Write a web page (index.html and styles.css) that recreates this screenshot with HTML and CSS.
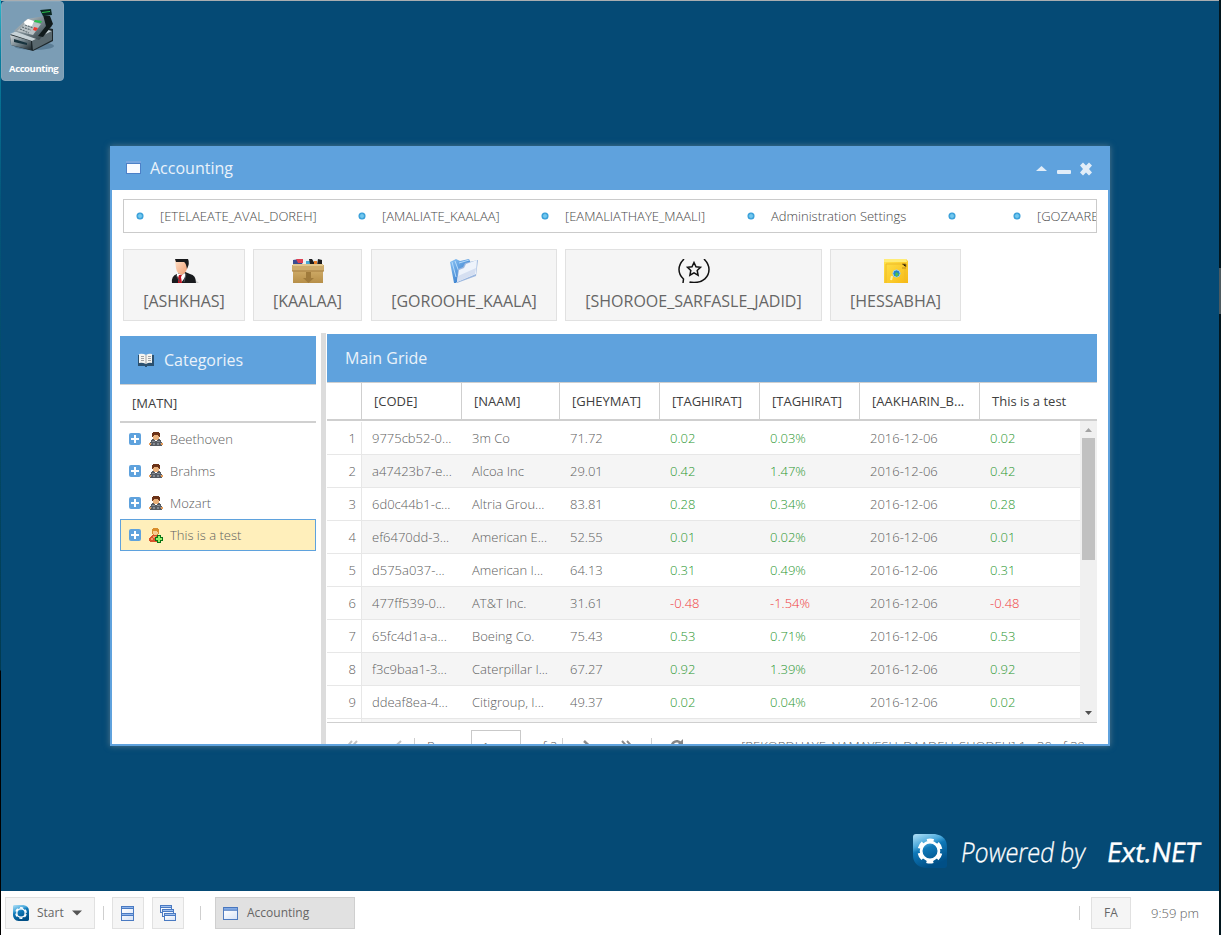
FILE: index.html
```html
<!DOCTYPE html>
<html lang="en">
<head>
<meta charset="utf-8">
<title>Accounting</title>
<link rel="stylesheet" href="styles.css">
</head>
<body>
<svg class="defs" width="0" height="0">
  <defs>
    <linearGradient id="logo" x1="0" y1="0" x2=".4" y2="1"><stop offset="0" stop-color="#b4e2f8"/><stop offset=".35" stop-color="#4aa9dc"/><stop offset=".5" stop-color="#0f78b8"/><stop offset="1" stop-color="#004f86"/></linearGradient>
    <linearGradient id="steel" x1="0" y1="0" x2="1" y2="1"><stop offset="0" stop-color="#d5dadd"/><stop offset=".5" stop-color="#73838b"/><stop offset="1" stop-color="#222c30"/></linearGradient>
    <linearGradient id="pane" x1="0" y1="0" x2="1" y2="1"><stop offset="0" stop-color="#fff"/><stop offset="1" stop-color="#d7e3f6"/></linearGradient>
    <linearGradient id="blue" x1="0" y1="0" x2="1" y2="1"><stop offset="0" stop-color="#8cc4f5"/><stop offset="1" stop-color="#1763bd"/></linearGradient>
    <linearGradient id="box" x1="0" y1="0" x2="0" y2="1"><stop offset="0" stop-color="#d8b674"/><stop offset="1" stop-color="#b78f48"/></linearGradient>
    <linearGradient id="gold" x1="0" y1="0" x2="1" y2="1"><stop offset="0" stop-color="#ffe44c"/><stop offset="1" stop-color="#f8b913"/></linearGradient>
    <linearGradient id="skin" x1="0" y1="0" x2="1" y2="1"><stop offset="0" stop-color="#ffe0c8"/><stop offset="1" stop-color="#ee9a6c"/></linearGradient>
    <symbol id="i-logo" viewBox="0 0 34 34">
      <path fill="url(#logo)" d="M3 0h19Q34 2 34 13v18q0 3-3 3H12Q0 32 0 21V3q0-3 3-3z"/>
      <circle cx="17" cy="17" r="8.900" fill="none" stroke="#fff" stroke-width="2.800"/>
      <circle cx="17" cy="17" r="11" fill="none" stroke="#fff" stroke-width="3" stroke-dasharray="6.700 4.820" stroke-dashoffset="-2.400"/>
    </symbol>
    <symbol id="i-win" viewBox="0 0 16 14">
      <path fill="#4373bd" d="M0 0h16v14H0z"/><path fill="#83aae4" d="M1 1h14v2H1z"/><path fill="url(#pane)" d="M1 4h14v9H1z"/>
    </symbol>
    <symbol id="i-plus" viewBox="0 0 12 12"><rect width="12" height="12" rx="2" fill="#5fa2dd"/><path fill="#fff" d="M5 2h2v3h3v2H7v3H5V7H2V5h3z"/></symbol>
    <symbol id="i-user" viewBox="0 0 16 16" shape-rendering="crispEdges">
      <path fill="#6b3218" d="M5 1h6v1h1v4h-1v2H5V6H4V2h1z"/><path fill="#e9b07a" d="M6 4h4v1h1v3h-1v1H6V8H5V5h1z"/>
      <path fill="#565b62" d="M4 8h2v1h1v1h2V9h1V8h2v1h1v2h1v2h1v1h-1v1H2v-1H1v-1h1v-2h1V9h1z"/>
      <path fill="#868c94" d="M4 10h3v1H4zM9 10h3v1H9zM5 12h2v2H5zM9 12h2v2H9zM3 12h1v1H3zM12 12h1v1h-1z"/><path fill="#e59c58" d="M1 12h2v2H1zM13 12h2v2h-2z"/>
    </symbol>
    <symbol id="i-useradd" viewBox="0 0 16 16" shape-rendering="crispEdges">
      <path fill="#d98d2c" d="M5 1h5v1h1v5h-1v1H5V7H4V2h1z"/><path fill="#f8cb90" d="M5 4h4v1h1v2H9v1H6V7H5z"/>
      <path fill="#d9532b" d="M4 8h6v1h1v6H2v-1H1v-3h1v-1h1V9h1z"/><path fill="#f39a62" d="M5 9h3v2H5zM3 11h2v2H3z"/>
      <path fill="#087416" d="M9 8h4v2h2v4h-2v2H9v-2H7v-4h2z"/><path fill="#8ef067" d="M10 9h2v2h2v2h-2v2h-2v-2H8v-2h2z"/>
    </symbol>
  </defs>
</svg>

<main class="desktop">
  <div class="shortcut">
    <svg width="48" height="44" viewBox="0 0 48 44">
      <ellipse cx="25" cy="37" rx="20" ry="4" fill="#36566e" opacity=".45"/>
      <path fill="#1d272b" d="M1 26l18-11 25 5v12L24 42 2 36z"/>
      <path fill="url(#steel)" d="M1 26l21 6v9L2 36z"/><path fill="#59686e" d="M23 32l20-10v9l-19 10z"/>
      <path fill="#18333e" d="M5 30l13 4v2L5 33z"/><path fill="#c7d2d7" d="M1 25l19-9 23 6-20 10z"/>
      <path fill="url(#steel)" d="M5 22L18 10l18-3 7 10-13 14z"/><path fill="#b9c2c6" d="M8 22l12-11 12 4-8 11z"/>
      <path fill="#111b1c" d="M34 6l7 1 3 8-10 13-5-1 8-10z"/><path fill="#0b2822" d="M31 1l11-1 1 6-9 1z"/>
      <path fill="#29c24c" d="M33 3l8-1v1l-8 1zM26 11l7 1-1 2-7-1z"/>
      <path fill="#fff" d="M15 13l4-3 6 2-2 5-7-1z"/><path stroke="#5f6d74" stroke-width="1.200" stroke-dasharray="2 1" d="M13 18l9 3M11 20l9 4M16 16l8 3"/><path fill="#ee3a30" d="M25 18l4 1-2 3-3-1z"/>
    </svg>
    <span>Accounting</span>
  </div>

  <section class="window">
    <header class="win-head">
      <svg width="15" height="13" viewBox="0 0 15 13"><path fill="#4c80c7" d="M0 0h15v13H0z"/><path fill="#78a6df" d="M0 0h15v2H0z"/><path fill="#f9fbff" d="M1 3h13v9H1z"/></svg>
      <h1>Accounting</h1>
      <svg class="tools" width="56" height="14" viewBox="0 0 56 14" fill="#e1edf8"><path d="M0 9l5.500-5L11 9z"/><rect x="21" y="8" width="14" height="4" rx="1"/><path d="M44 3l3-3 3 3 3-3 3 3-3 3.500 3 3.500-3 3-3-3-3 3-3-3 3-3.500z" transform="translate(0 .5)"/></svg>
    </header>
    <div class="win-body">
      <nav class="menu">
        <i></i><span class="m1">[ETELAEATE_AVAL_DOREH]</span>
        <i></i><span class="m2">[AMALIATE_KAALAA]</span>
        <i></i><span class="m3">[EAMALIATHAYE_MAALI]</span>
        <i></i><span class="m4">Administration Settings</span>
        <i></i><span class="m5"></span>
        <i></i><span class="m6">[GOZAARESHAAT]</span>
      </nav>
      <div class="actions">
        <button class="act a1"><svg width="32" height="24" viewBox="0 0 32 24"><path fill="#b9b9b9" opacity=".6" d="M24 18l7 6h-9z"/><path fill="#191b1e" d="M4 24q-1-7 5-9l6-3 7 3q6 1 6 9z"/><path fill="url(#skin)" d="M7 1h13l-1 9q-2 5-5 6-5-1-6-7z"/><path fill="#18191b" d="M7 0h13q2 4-1 10-1-6-3-7L8 3z"/><path fill="#fff" d="M9 14l5 2 3-2 1 3-5 7-4-7z"/><path fill="#c31422" d="M11 16h3l-1 2 1 6h-4v-5z"/><path stroke="#50555b" fill="none" d="M8 16l4 7M18 15l-2 8"/></svg><span>[ASHKHAS]</span></button>
        <button class="act a2"><svg width="32" height="24" viewBox="0 0 32 24"><path d="M2 0h28v7H2z" fill="#edf0f1"/><path fill="#394c91" d="M1 1l7-1 3 6H1z"/><path fill="#de4053" d="M4 0h7v4H6z"/><path fill="#49a9d4" d="M14 2h4v4h-4z"/><path fill="#1d1c1d" d="M17 0h3l3 5h-5zM26 0l4 1v5h-5z"/><path fill="#e77e27" d="M22 2h3v3h-3z"/><path fill="url(#box)" d="M1 6h30v18H1z"/><path fill="#ceac6c" d="M0 6h32v6H0z"/><path fill="#e2c78e" d="M1 5h30v2H1z"/><path stroke="#a47c3f" d="M0 12h32"/><path fill="#a07b3c" d="M14 13h5v6h3l-5.500 5-5.500-5h3z"/></svg><span>[KAALAA]</span></button>
        <button class="act a3"><svg width="32" height="24" viewBox="0 0 32 24"><path fill="url(#blue)" d="M2 3l6-3 4 2 9-2 3 7L8 24H6z"/><path stroke="#b5dafb" fill="none" d="M4 3l4 15M7 2l4 11M11 4l10-3"/><path fill="#9bb7df" d="M9 24l1-14 5-2 2-4 13-3-2 16z"/><path fill="#eef3fb" d="M9 23l2-12 5-2 2-4 11-4-1 14z"/><path fill="#d5dff1" d="M10 17l18-8-1 6L9 23z"/></svg><span>[GOROOHE_KAALA]</span></button>
        <button class="act a4"><svg width="32" height="24" viewBox="0 0 32 24" fill="none" stroke="#111" stroke-width="1.500"><path d="M6 0Q1 5 1 10.500 1 16 5.500 20L5 24M26 0q5 5 5 10.500C31 18 25 23.500 16 23.500q-3 0-4.500-.5"/><path d="M16 3.500l2 4.300 4.500.5-3.300 3.200.9 4.700-4.100-2.300-4.100 2.300.9-4.700-3.300-3.200 4.500-.5z"/></svg><span>[SHOROOE_SARFASLE_JADID]</span></button>
        <button class="act a5"><svg width="32" height="24" viewBox="0 0 32 24"><path fill="url(#gold)" d="M4 0h22l2 2v22H4z"/><path fill="#ffec76" d="M4 0h22l1 3H4z"/><path stroke="#eebb28" fill="none" d="M6 24V5h19v19"/><path stroke="#b98b1b" d="M22 5h4v3M22 9h4"/><circle cx="16.500" cy="14.500" r="3.600" fill="#2484c9" stroke="#9fd2ef"/><path fill="#55bf44" d="M16 13l3 2-2 3-2-2z"/><path stroke="#fff0a0" stroke-width="2" d="M12 17l-1 4"/></svg><span>[HESSABHA]</span></button>
      </div>

      <div class="panes">
        <aside class="tree">
          <h2><svg width="16" height="14" viewBox="0 0 16 14"><path fill="#2b506f" d="M0 2h16v11H9v1H7v-1H0z"/><path fill="#f4f4f0" d="M1 1q4-1 7 1 3-2 6-1v9q-3-1-6 1-4-2-7-1z"/><path stroke="#a0a3a5" fill="none" d="M8 2v9M3 3.500h3M3 5.500h3M3 7.500h3M10 3.500h3M10 5.500h3M10 7.500h3"/></svg>Categories</h2>
          <div class="tree-head">[MATN]</div>
          <div class="node"><svg width="12" height="12"><use href="#i-plus"/></svg><svg width="16" height="16"><use href="#i-user"/></svg>Beethoven</div>
          <div class="node"><svg width="12" height="12"><use href="#i-plus"/></svg><svg width="16" height="16"><use href="#i-user"/></svg>Brahms</div>
          <div class="node"><svg width="12" height="12"><use href="#i-plus"/></svg><svg width="16" height="16"><use href="#i-user"/></svg>Mozart</div>
          <div class="node selected"><svg width="12" height="12"><use href="#i-plus"/></svg><svg width="16" height="16"><use href="#i-useradd"/></svg>This is a test</div>
        </aside>
        <div class="splitter"></div>
        <section class="grid">
          <h2>Main Gride</h2>
          <div class="row head"><b></b><b>[CODE]</b><b>[NAAM]</b><b>[GHEYMAT]</b><b>[TAGHIRAT]</b><b>[TAGHIRAT]</b><b>[AAKHARIN_B...</b><b>This is a test</b></div>
          <div class="view">
            <div class="rows">
              <div class="row"><b>1</b><span>9775cb52-0...</span><span>3m Co</span><span>71.72</span><span class="up">0.02</span><span class="up">0.03%</span><span>2016-12-06</span><span class="up">0.02</span></div>
              <div class="row"><b>2</b><span>a47423b7-e...</span><span>Alcoa Inc</span><span>29.01</span><span class="up">0.42</span><span class="up">1.47%</span><span>2016-12-06</span><span class="up">0.42</span></div>
              <div class="row"><b>3</b><span>6d0c44b1-c...</span><span>Altria Grou...</span><span>83.81</span><span class="up">0.28</span><span class="up">0.34%</span><span>2016-12-06</span><span class="up">0.28</span></div>
              <div class="row"><b>4</b><span>ef6470dd-3...</span><span>American E...</span><span>52.55</span><span class="up">0.01</span><span class="up">0.02%</span><span>2016-12-06</span><span class="up">0.01</span></div>
              <div class="row"><b>5</b><span>d575a037-...</span><span>American I...</span><span>64.13</span><span class="up">0.31</span><span class="up">0.49%</span><span>2016-12-06</span><span class="up">0.31</span></div>
              <div class="row"><b>6</b><span>477ff539-0...</span><span>AT&amp;T Inc.</span><span>31.61</span><span class="down">-0.48</span><span class="down">-1.54%</span><span>2016-12-06</span><span class="down">-0.48</span></div>
              <div class="row"><b>7</b><span>65fc4d1a-a...</span><span>Boeing Co.</span><span>75.43</span><span class="up">0.53</span><span class="up">0.71%</span><span>2016-12-06</span><span class="up">0.53</span></div>
              <div class="row"><b>8</b><span>f3c9baa1-3...</span><span>Caterpillar I...</span><span>67.27</span><span class="up">0.92</span><span class="up">1.39%</span><span>2016-12-06</span><span class="up">0.92</span></div>
              <div class="row"><b>9</b><span>ddeaf8ea-4...</span><span>Citigroup, I...</span><span>49.37</span><span class="up">0.02</span><span class="up">0.04%</span><span>2016-12-06</span><span class="up">0.02</span></div>
              <div class="row"><b></b><span></span><span></span><span></span><span></span><span></span><span></span><span></span></div>
            </div>
            <div class="scroll">
              <svg width="17" height="17"><path fill="#a3a3a3" d="M5 11l3.500-4 3.500 4z"/></svg>
              <div class="thumb"></div>
              <svg width="17" height="17"><path fill="#505050" d="M5 6h7l-3.500 4z"/></svg>
            </div>
          </div>
          <footer class="pager">
            <svg class="p1" width="13" height="13" fill="none" stroke="#c3c3c3" stroke-width="2"><path d="M7 1L2 6.500 7 12M12 1L7 6.500l5 5.500"/></svg>
            <svg class="p2" width="9" height="13" fill="none" stroke="#c3c3c3" stroke-width="2"><path d="M8 1L2 6.500 8 12"/></svg>
            <i class="p3"></i><span class="p4">Page</span><span class="field">1</span><span class="p5">of 2</span><i class="p6"></i>
            <svg class="p7" width="9" height="13" fill="none" stroke="#8b8b8b" stroke-width="2.500"><path d="M1 1l6 5.500L1 12"/></svg>
            <svg class="p8" width="13" height="13" fill="none" stroke="#8b8b8b" stroke-width="2"><path d="M1 1l5 5.500L1 12M6 1l5 5.500L6 12"/></svg>
            <i class="p9"></i>
            <svg class="p10" width="15" height="15" fill="none" stroke="#858585" stroke-width="2.500"><path d="M12 4.500A5 5 0 1 0 12 10"/><path d="M14 0v6H8z" fill="#858585" stroke="none"/></svg>
            <span class="total">[REKORDHAYE_NAMAYESH_DAADEH_SHODEH] 1 - 30 of 39</span>
          </footer>
        </section>
      </div>
    </div>
  </section>

  <div class="brand">
    <svg width="34" height="34"><use href="#i-logo"/></svg>
    <svg width="250" height="48" viewBox="0 0 250 48" fill="#fff"><g transform="translate(0 35) skewX(-8)"><text class="hand thin" x="11" y="0" textLength="124" lengthAdjust="spacingAndGlyphs">Powered by</text><text class="hand" x="157" y="0" textLength="93" lengthAdjust="spacingAndGlyphs">Ext.NET</text></g></svg>
  </div>
</main>

<footer class="taskbar">
  <button class="tb start"><svg width="16" height="16"><use href="#i-logo"/></svg><span>Start</span><svg width="10" height="6"><path fill="#555" d="M0 .5h10L5 5.500z"/></svg></button>
  <i class="s1"></i>
  <button class="tb sq t1"><svg width="13" height="15" viewBox="0 0 13 15"><path fill="#4a7ac2" d="M0 0h13v15H0z"/><path fill="#8fb5ec" d="M1 1h11v1H1zM1 8h11v1H1z"/><path fill="url(#pane)" d="M1 3h11v4H1zM1 10h11v4H1z"/></svg></button>
  <button class="tb sq t2"><svg width="16" height="16" viewBox="0 0 16 16"><g id="mini"><path fill="#4a7ac2" d="M0 0h12v8H0z"/><path fill="#9fc0ef" d="M1 1h10v1H1z"/><path fill="url(#pane)" d="M1 3h10v4H1z"/></g><use href="#mini" x="2" y="4"/><use href="#mini" x="4" y="8"/></svg></button>
  <i class="s2"></i>
  <button class="tb task"><svg width="15" height="13"><use href="#i-win"/></svg><span>Accounting</span></button>
  <i class="s3"></i>
  <button class="tb lang"><span>FA</span></button>
  <span class="clock">9:59 pm</span>
</footer>
</body>
</html>
```
FILE: styles.css
```css
* { box-sizing: border-box; }
body {
  margin: 0;
  width: 1221px;
  height: 935px;
  overflow: hidden;
  display: flex;
  flex-direction: column;
  font: 300 13px/17px "Open Sans", sans-serif;
  color: #606060;
  background: linear-gradient(#02161e 268px, #4d5a60 268px, #4d5a60 314px, #02161e 314px) right / 2px 100% no-repeat,
    linear-gradient(#2fb8ca, #087c9c 60px, #04567a 200px, #023b50 670px, #000 671px) left / 1px 100% no-repeat, #fff;
}
button { font: inherit; color: inherit; padding: 0; border-radius: 0; }
svg { flex: none; display: block; }
h1, h2 { margin: 0; font-size: 16px; font-weight: 400; color: #eaf2fa; }
i { flex: none; }
.defs { position: absolute; }

.desktop {
  position: relative;
  margin: 0 2px 0 1px;
  height: 891px;
  flex: none;
  background: #054a75;
  border-top: 1px solid #a9adb0;
}
.shortcut {
  width: 63px;
  height: 80px;
  padding: 7px 0 0 7px;
  border: 1px solid #86a5ba;
  border-radius: 4px;
  background: #7b9db5;
  color: #fff;
  font-size: 9.5px;
  font-weight: 700;
  letter-spacing: -.4px;
}
.shortcut span { display: block; margin-top: 7px; }

.window {
  position: absolute;
  left: 109px;
  top: 145px;
  width: 1000px;
  height: 600px;
  border: 2px solid #5fa2dd;
  border-top: 0;
  background: #fff;
  box-shadow: 0 0 6px #56788c;
  overflow: hidden;
}
.win-head {
  height: 44px;
  display: flex;
  align-items: center;
  background: #5fa2dd;
  padding: 0 16px 0 14px;
}
.win-head > svg:first-child { margin-top: -2px; }
.win-head h1 { margin-left: 9px; flex: 1; }
.tools { margin-top: 1px; }
.win-body { padding: 9px 11px 0; }
.menu {
  height: 34px;
  border: 1px solid #cbcbcb;
  display: flex;
  align-items: center;
  overflow: hidden;
  padding-left: 13px;
  white-space: nowrap;
  color: #484848;
}
.menu i {
  width: 6px;
  height: 6px;
  border-radius: 50%;
  background: #73c8ef;
  box-shadow: 0 0 0 .5px #2b96d4;
  border: 1px solid #3fa4dc;
  margin-right: 17px;
}
.menu span { flex: none; }
.m1 { width: 199px; }
.m2 { width: 160px; }
.m3 { width: 183px; }
.m4 { width: 178px; }
.m5 { width: 42px; }
.actions { display: flex; margin-top: 16px; }
.act {
  height: 72px;
  background: #f5f5f5;
  border: 1px solid #e1e1e1;
  font-size: 16px;
  font-weight: 400;
  line-height: 22px;
  color: #666;
  display: flex;
  flex-direction: column;
  align-items: center;
  padding-top: 9px;
  gap: 7px;
}
.a1 { width: 122px; }
.a2 { width: 109px; margin-left: 8px; }
.a3 { width: 186px; margin-left: 9px; }
.a4 { width: 257px; margin-left: 8px; }
.a5 { width: 131px; margin-left: 8px; }

.panes { display: flex; margin: 12px 0 0 -3px; height: 411px; }
.tree { width: 196px; margin-top: 3px; }
.tree h2 {
  height: 49px;
  background: #5fa2dd;
  border-bottom: 1px solid #d0d0d0;
  display: flex;
  align-items: center;
  padding-left: 18px;
  gap: 10px;
}
.tree-head {
  height: 38px;
  border-bottom: 2px solid #d0d0d0;
  padding: 10px 12px;
  font-weight: 400;
  color: #404040;
}
.node {
  height: 32px;
  display: flex;
  align-items: center;
  padding-left: 9px;
}
.node svg + svg { margin: 0 6px 0 7px; }
.node.selected {
  background: #ffefbb;
  border: 1px solid #5fa2dd;
  padding-left: 8px;
}
.splitter { width: 5px; margin: 0 1px 0 5px; background: #dcdcdc; }
.grid { width: 770px; padding-top: 1px; }
.grid h2 {
  height: 49px;
  padding: 13px 18px;
  line-height: 22px;
  background: #5fa2dd;
  border-bottom: 1px solid #cfcfcf;
}
.row {
  display: grid;
  grid-template: 32px / 35px 100px 98px 100px 100px 100px 120px 1fr;
  height: 33px;
  border-bottom: 1px solid #e7e7e7;
  line-height: 33px;
  white-space: nowrap;
}
.row span { padding-left: 10px; }
.row b {
  font-weight: 300;
  text-align: right;
  padding-right: 5px;
  border-right: 1px solid #e7e7e7;
  background: #fff;
}
.rows .row:nth-child(even) { background: #f5f5f5; }
.row.head {
  height: 38px;
  grid-template-rows: 36px;
  line-height: 37px;
  border-bottom: 2px solid #cfcfcf;
}
.head b {
  font-weight: 400;
  color: #404040;
  text-align: left;
  padding: 0 0 0 12px;
  border-color: #cfcfcf;
}
.head b:last-child { border: 0; }
.row .up { color: #2c9731; }
.row .down { color: #f03a3a; }
.view { display: flex; height: 302px; border-bottom: 1px solid #cfcfcf; overflow: hidden; }
.rows { width: 753px; padding-top: 1px; }
.scroll { width: 17px; background: #f0f0f0; display: flex; flex-direction: column; }
.thumb { width: 13px; height: 122px; margin: 0 2px auto; background: #c1c1c1; }

.pager { height: 44px; display: flex; padding: 7px 12px 0 18px; white-space: nowrap; }
.pager svg { margin-top: 10px; }
.pager i { width: 1px; height: 20px; margin-top: 8px; background: #cfcfcf; }
.pager span { padding-top: 8px; }
.pager .p2 { margin-left: 35px; }
.pager .p3 { margin-left: 12px; }
.p4 { margin-left: 12px; width: 43px; }
.pager .field { width: 50px; height: 32px; border: 1px solid #c9c9c9; padding-left: 10px; margin-left: 1px; }
.p5 { margin-left: 14px; width: 27px; }
.pager .p7 { margin-left: 20px; }
.pager .p8 { margin-left: 29px; }
.pager .p9 { margin-left: 17px; }
.pager .p10 { margin: 9px 0 0 17px; }
.total { margin-left: auto; }

.brand {
  position: absolute;
  right: 10px;
  bottom: 16px;
  display: flex;
  align-items: center;
  width: 296px;
}
.brand svg + svg { margin-left: 2px; overflow: visible; }
.hand { font-family: "Open Sans", sans-serif; font-size: 27px; font-weight: 400; stroke: #fff; stroke-width: .5px; }
.thin { font-weight: 300; stroke-width: .35px; }

.taskbar {
  height: 44px;
  margin: 0 2px 0 1px;
  background: #fff;
  display: flex;
  align-items: center;
  padding: 0 0 0 4px;
  font-weight: 400;
  color: #666;
}
.taskbar i { width: 1px; height: 14px; background: #cfcfcf; }
.tb {
  height: 32px;
  border: 1px solid #e1e1e1;
  background: #f5f5f5;
  display: flex;
  align-items: center;
  font-size: 12px;
}
.tb span { padding-bottom: 1px; }
.start { width: 90px; padding-left: 7px; gap: 8px; }
.sq { width: 32px; padding-right: 1px; justify-content: center; }
.s1 { margin-left: 8px; }
.t1 { margin-left: 8px; }
.t2 { margin-left: 8px; }
.s2 { margin: 0 14px 0 16px; }
.task { width: 140px; background: #e1e1e1; border-color: #cfcfcf; padding-left: 7px; gap: 9px; }
.s3 { margin-left: 724px; }
.lang { width: 40px; margin-left: 11px; justify-content: center; }
.clock { font-weight: 300; margin-left: 20px; color: #606060; }
```
